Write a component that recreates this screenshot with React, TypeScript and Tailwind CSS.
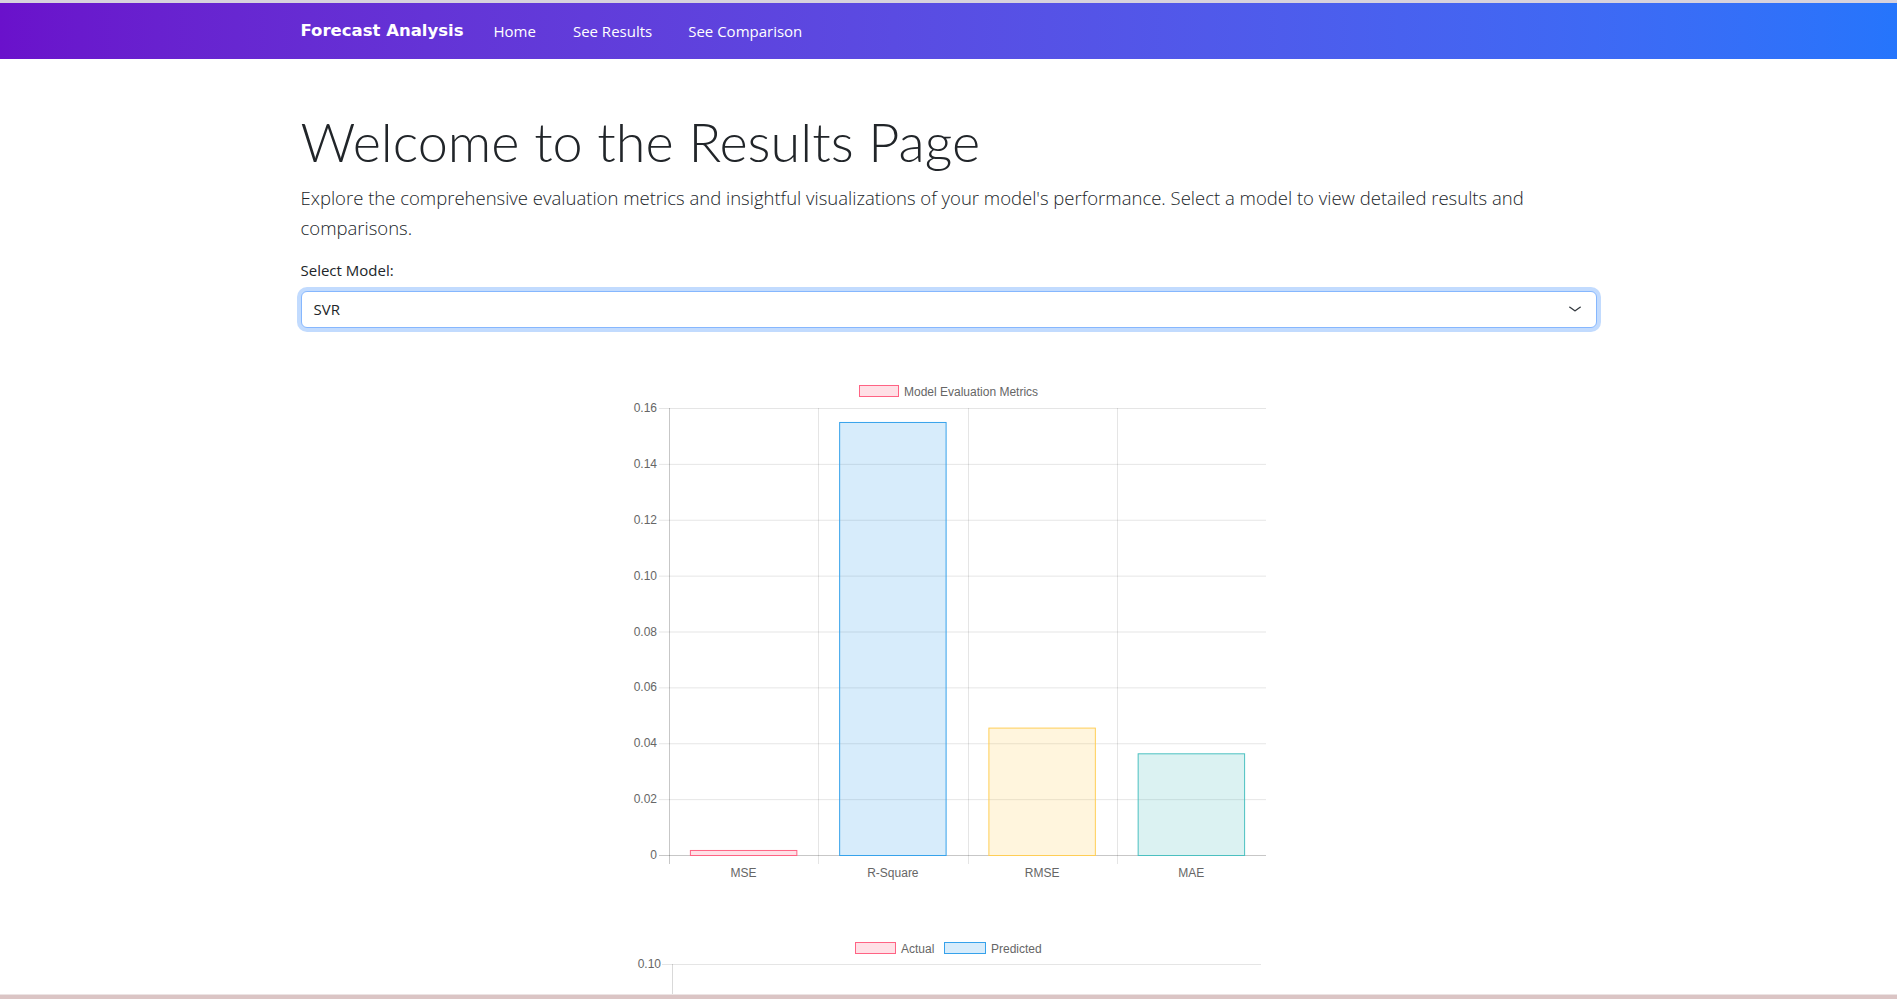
import React from "react";

const chartFont = '"Liberation Sans", Arial, Helvetica, sans-serif';

function MetricsChart() {
  const ox = 618;
  const oy = 370;
  const X = (x: number) => x - ox;
  const Y = (y: number) => y - oy;
  const top = 408;
  const zero = 855;
  const step = (zero - top) / 8;
  const left = 668;
  const right = 1265;
  const catW = (right - left) / 4;
  const ticks = ["0.16", "0.14", "0.12", "0.10", "0.08", "0.06", "0.04", "0.02", "0"];
  const bars = [
    { label: "MSE", v: 0.0018, fill: "rgba(255,99,132,0.2)", stroke: "rgb(255,99,132)" },
    { label: "R-Square", v: 0.155, fill: "rgba(54,162,235,0.2)", stroke: "rgb(54,162,235)" },
    { label: "RMSE", v: 0.0456, fill: "rgba(255,206,86,0.2)", stroke: "rgb(255,206,86)" },
    { label: "MAE", v: 0.0364, fill: "rgba(75,192,192,0.2)", stroke: "rgb(75,192,192)" },
  ];
  const bw = catW * 0.72;
  return (
    <svg width={660} height={520} className="block" style={{ fontFamily: chartFont }}>
      <rect x={X(858.5)} y={Y(385.5)} width={39} height={11} fill="rgba(255,99,132,0.2)" stroke="rgb(255,99,132)" strokeWidth={1} />
      <text x={X(903)} y={Y(395.5)} fontSize={12} fill="#666">Model Evaluation Metrics</text>
      {ticks.map((t, i) => {
        const y = top + i * step;
        return (
          <g key={t}>
            <line x1={X(658)} x2={X(right)} y1={Y(y) + 0.5} y2={Y(y) + 0.5} stroke={i === 8 ? "rgba(0,0,0,0.22)" : "rgba(0,0,0,0.1)"} strokeWidth={1} />
            <text x={X(656)} y={Y(y) + 4} fontSize={12} fill="#666" textAnchor="end">{t}</text>
          </g>
        );
      })}
      {[0, 1, 2, 3].map((i) => {
        const x = Math.round(left + i * catW) + 0.5;
        return <line key={i} x1={X(x)} x2={X(x)} y1={Y(top)} y2={Y(zero + 9)} stroke={i === 0 ? "rgba(0,0,0,0.22)" : "rgba(0,0,0,0.1)"} strokeWidth={1} />;
      })}
      {bars.map((b, i) => {
        const cx = left + catW * (i + 0.5);
        const h = (b.v / 0.16) * (zero - top);
        return (
          <g key={b.label}>
            <rect x={X(cx - bw / 2) + 0.5} y={Y(zero - h) + 0.5} width={bw - 1} height={h} fill={b.fill} stroke={b.stroke} strokeWidth={1} />
            <text x={X(cx)} y={Y(877)} fontSize={12} fill="#666" textAnchor="middle">{b.label}</text>
          </g>
        );
      })}
    </svg>
  );
}

function ComparisonChart() {
  const ox = 618;
  const oy = 930;
  const X = (x: number) => x - ox;
  const Y = (y: number) => y - oy;
  const top = 964;
  const left = 671;
  const right = 1260;
  return (
    <svg width={660} height={120} className="block" style={{ fontFamily: chartFont }}>
      <rect x={X(854.5)} y={Y(942.5)} width={40} height={11} fill="rgba(255,99,132,0.2)" stroke="rgb(255,99,132)" strokeWidth={1} />
      <text x={X(900)} y={Y(952.5)} fontSize={12} fill="#666">Actual</text>
      <rect x={X(943.5)} y={Y(942.5)} width={41} height={11} fill="rgba(54,162,235,0.2)" stroke="rgb(54,162,235)" strokeWidth={1} />
      <text x={X(990)} y={Y(952.5)} fontSize={12} fill="#666">Predicted</text>
      <line x1={X(661)} x2={X(right)} y1={Y(top) + 0.5} y2={Y(top) + 0.5} stroke="rgba(0,0,0,0.1)" strokeWidth={1} />
      <text x={X(660)} y={Y(top) + 4} fontSize={12} fill="#666" textAnchor="end">0.10</text>
      <line x1={X(left) + 0.5} x2={X(left) + 0.5} y1={Y(top)} y2={Y(top) + 100} stroke="rgba(0,0,0,0.15)" strokeWidth={1} />
      <line x1={X(661)} x2={X(right)} y1={Y(top + 56) + 0.5} y2={Y(top + 56) + 0.5} stroke="rgba(0,0,0,0.1)" strokeWidth={1} />
    </svg>
  );
}

export default function App() {
  return (
    <div className="h-screen overflow-hidden bg-white" style={{ fontFamily: '"Open Sans", "Noto Sans", sans-serif' }}>
      <div className="h-[3px] bg-[#d7d2dd]" />
      <nav className="h-[56px] bg-gradient-to-r from-[#6a11cb] to-[#2575fc]">
        <div className="mx-auto flex h-full w-[1320px] items-center px-3">
          <span className="mr-[30px] text-[16.5px] font-bold text-white" style={{ fontFamily: '"DejaVu Sans", sans-serif' }}>
            Forecast Analysis
          </span>
          <a className="mr-[37px] text-[15px] text-white">Home</a>
          <a className="mr-[36px] text-[15px] text-white">See Results</a>
          <a className="text-[15px] text-white">See Comparison</a>
        </div>
      </nav>
      <main className="mx-auto w-[1320px] px-3 pt-[51px]">
        <h1 className="text-[54px] font-light leading-[1.2] text-[#212529]" style={{ fontFamily: 'Lato, "Open Sans", sans-serif' }}>
          Welcome to the Results Page
        </h1>
        <p className="mt-[8px] text-[18.5px] font-light leading-[30px] text-[#212529]">
          Explore the comprehensive evaluation metrics and insightful visualizations of your model's performance. Select a model to view detailed results and
          <br />
          comparisons.
        </p>
        <label className="mt-[15px] block text-[15px] leading-6 text-[#212529]">Select Model:</label>
        <div className="mt-[9px] flex h-[37px] items-center justify-between rounded-md border border-[#86b7fe] bg-white pl-3 pr-[14px] shadow-[0_0_0_4px_rgba(13,110,253,0.25)]">
          <span className="text-[15px] text-[#212529]">SVR</span>
          <svg width="14" height="10" viewBox="0 0 16 16" preserveAspectRatio="none">
            <path d="M2 5l6 6 6-6" fill="none" stroke="#343a40" strokeWidth="1.8" strokeLinecap="round" strokeLinejoin="round" />
          </svg>
        </div>
        <div className="mt-[42px] flex justify-center">
          <MetricsChart />
        </div>
        <div className="mt-[40px] flex justify-center">
          <ComparisonChart />
        </div>
      </main>
      <div className="fixed bottom-0 left-0 right-0 h-[5px] border-t border-[#ece4e4] bg-[#dbc5c5]" />
    </div>
  );
}
